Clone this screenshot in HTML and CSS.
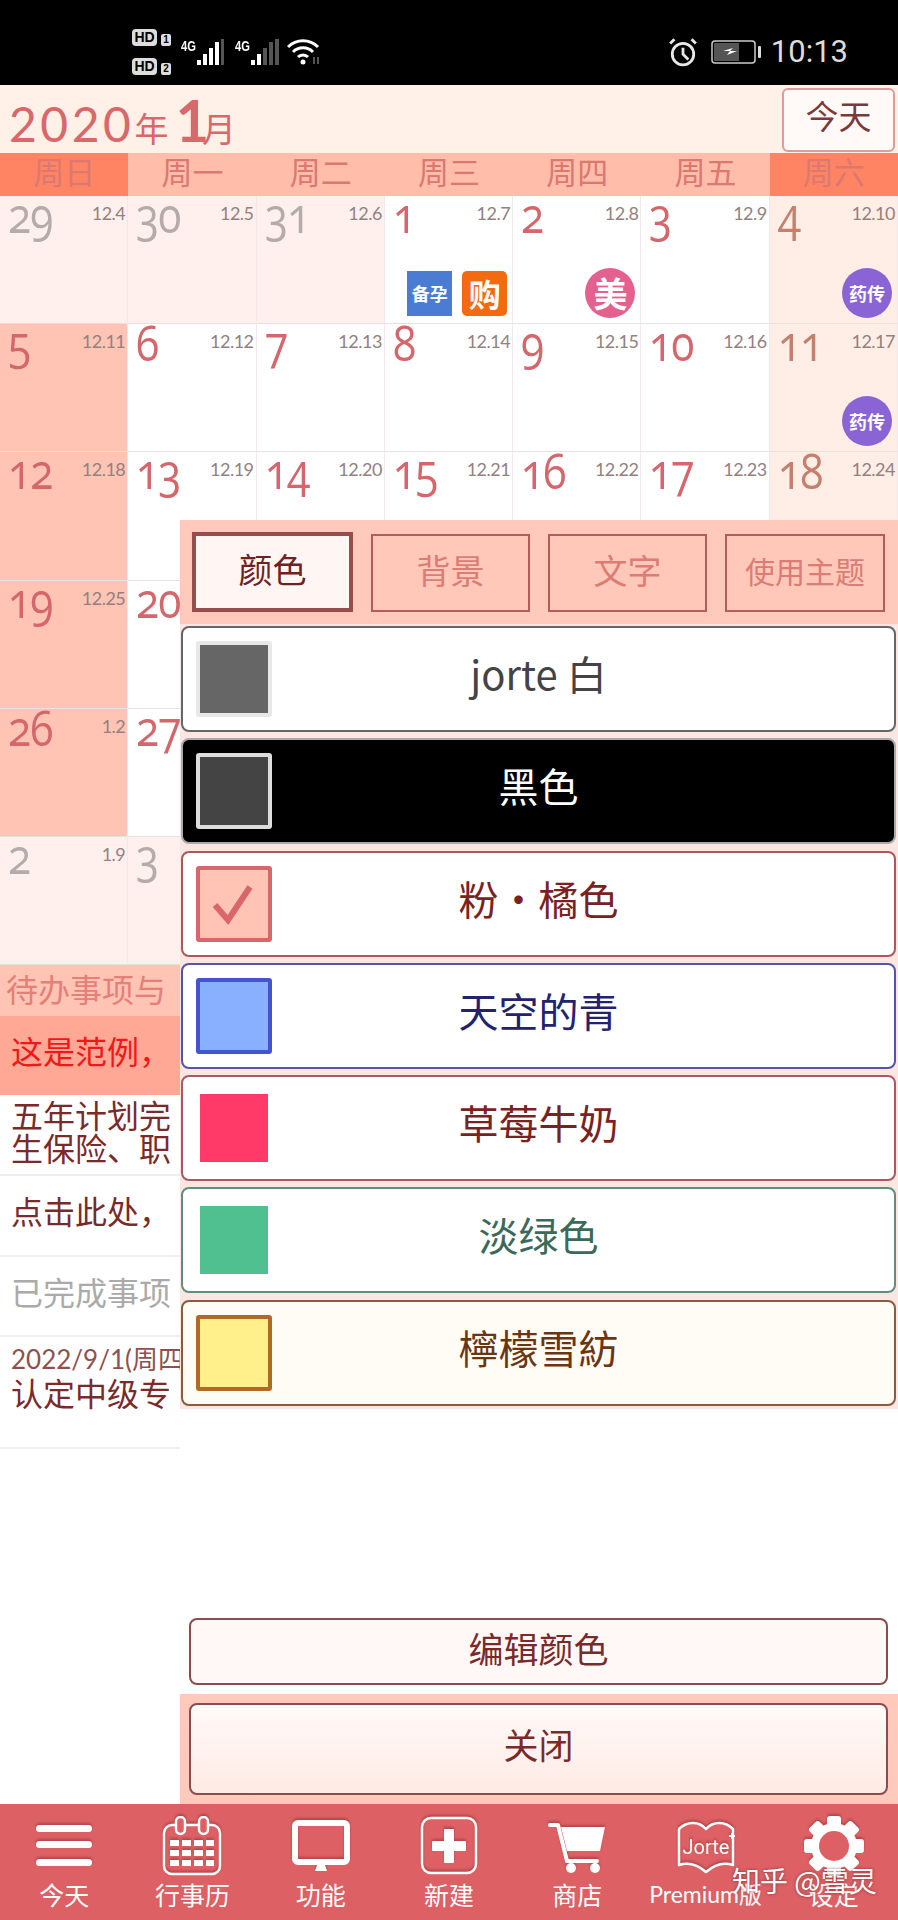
FILE: index.html
```html
<!DOCTYPE html>
<html lang="zh-CN">
  <head>
    <meta charset="UTF-8" />
    <meta name="viewport" content="width=device-width, initial-scale=1.0" />
    <title>jorte</title>
    <link rel="stylesheet" href="styles.css">
  </head>
  <body>
    <div id="app">
      <!-- status bar -->
      <div class="status">
        <div class="hd-col">
          <div class="hd"><span class="hd-box">HD</span><span class="hd-num">1</span></div>
          <div class="hd"><span class="hd-box">HD</span><span class="hd-num">2</span></div>
        </div>
        <div class="sim"><span class="sim-label">4G</span>
          <svg width="28" height="26" viewBox="0 0 28 26"><g fill="#fff"><rect x="0" y="21" width="4" height="5"/><rect x="6" y="15" width="4" height="11"/><rect x="12" y="9" width="4" height="17"/><rect x="18" y="3" width="4" height="23"/></g><rect x="24" y="0" width="3" height="26" fill="#555"/></svg>
        </div>
        <div class="sim"><span class="sim-label">4G</span>
          <svg width="29" height="26" viewBox="0 0 29 26"><rect x="0" y="21" width="4" height="5" fill="#fff"/><rect x="6" y="15" width="4" height="11" fill="#fff"/><g fill="#555"><rect x="12" y="9" width="4" height="17"/><rect x="18" y="3" width="4" height="23"/><rect x="24" y="0" width="4" height="26"/></g></svg>
        </div>
        <svg class="wifi" width="34" height="28" viewBox="0 0 34 28" fill="none" stroke="#fff" stroke-width="3"><path d="M1 9a21 21 0 0 1 30 0"/><path d="M6 14a14 14 0 0 1 20 0"/><path d="M11 19a7 7 0 0 1 10 0"/><circle cx="16" cy="24" r="2.5" fill="#fff" stroke="none"/><path d="M27 19v7M31 19v7" stroke="#555" stroke-width="2"/></svg>
        <div class="status-right">
          <svg width="30" height="30" viewBox="0 0 28 28" fill="none" stroke="#e8e8e8" stroke-width="2.6"><circle cx="14" cy="16" r="10"/><path d="M14 10v6l5 5M2 6l4-4M26 6l-4-4"/></svg>
          <svg width="50" height="24" viewBox="0 0 50 24"><rect x="1" y="1" width="43" height="22" rx="3" fill="none" stroke="#ccc" stroke-width="1.5"/><rect x="3" y="3" width="25" height="18" fill="#555"/><path d="M12 11l10-3-3 3h7l-10 4 3-4z" fill="#fff"/><rect x="47" y="6" width="3" height="12" rx="1" fill="#ddd"/></svg>
          <span class="clock">10:13</span>
        </div>
      </div>

      <div class="head">
        <div class="title"><span class="year">2020</span><span class="unit">年</span><span class="month">1</span><span class="unit">月</span></div>
        <div class="today-btn">今天</div>
      </div>

      <div class="week">
        <div class="wd wd-end">周日</div>
        <div class="wd">周一</div>
        <div class="wd">周二</div>
        <div class="wd">周三</div>
        <div class="wd">周四</div>
        <div class="wd">周五</div>
        <div class="wd wd-end">周六</div>
      </div>

      <div class="cal">
        <div class="c out"><div class="top"><span class="n">29</span><span class="lu">12.4</span></div></div>
        <div class="c out"><div class="top"><span class="n">30</span><span class="lu">12.5</span></div></div>
        <div class="c out"><div class="top"><span class="n">31</span><span class="lu">12.6</span></div></div>
        <div class="c"><div class="top"><span class="n">1</span><span class="lu">12.7</span></div>
          <div class="events"><span class="ev ev-blue">备孕</span><span class="ev ev-orange">购</span></div></div>
        <div class="c"><div class="top"><span class="n">2</span><span class="lu">12.8</span></div>
          <div class="events"><span class="ev ev-round ev-pink">美</span></div></div>
        <div class="c"><div class="top"><span class="n">3</span><span class="lu">12.9</span></div></div>
        <div class="c sat"><div class="top"><span class="n">4</span><span class="lu">12.10</span></div>
          <div class="events"><span class="ev ev-round ev-purple">药传</span></div></div>

        <div class="c sun"><div class="top"><span class="n">5</span><span class="lu">12.11</span></div></div>
        <div class="c"><div class="top"><span class="n">6</span><span class="lu">12.12</span></div></div>
        <div class="c"><div class="top"><span class="n">7</span><span class="lu">12.13</span></div></div>
        <div class="c"><div class="top"><span class="n">8</span><span class="lu">12.14</span></div></div>
        <div class="c"><div class="top"><span class="n">9</span><span class="lu">12.15</span></div></div>
        <div class="c"><div class="top"><span class="n">10</span><span class="lu">12.16</span></div></div>
        <div class="c sat"><div class="top"><span class="n">11</span><span class="lu">12.17</span></div>
          <div class="events"><span class="ev ev-round ev-purple">药传</span></div></div>

        <div class="c sun"><div class="top"><span class="n">12</span><span class="lu">12.18</span></div></div>
        <div class="c"><div class="top"><span class="n">13</span><span class="lu">12.19</span></div></div>
        <div class="c"><div class="top"><span class="n">14</span><span class="lu">12.20</span></div></div>
        <div class="c"><div class="top"><span class="n">15</span><span class="lu">12.21</span></div></div>
        <div class="c"><div class="top"><span class="n">16</span><span class="lu">12.22</span></div></div>
        <div class="c"><div class="top"><span class="n">17</span><span class="lu">12.23</span></div></div>
        <div class="c sat"><div class="top"><span class="n">18</span><span class="lu">12.24</span></div></div>

        <div class="c sun"><div class="top"><span class="n">19</span><span class="lu">12.25</span></div></div>
        <div class="c"><div class="top"><span class="n">20</span></div></div>
        <div class="c"></div><div class="c"></div><div class="c"></div><div class="c"></div><div class="c sat"></div>

        <div class="c sun"><div class="top"><span class="n">26</span><span class="lu">1.2</span></div></div>
        <div class="c"><div class="top"><span class="n">27</span></div></div>
        <div class="c"></div><div class="c"></div><div class="c"></div><div class="c"></div><div class="c sat"></div>

        <div class="c out"><div class="top"><span class="n">2</span><span class="lu">1.9</span></div></div>
        <div class="c out"><div class="top"><span class="n">3</span></div></div>
        <div class="c out"></div><div class="c out"></div><div class="c out"></div><div class="c out"></div><div class="c out"></div>
      </div>

      <div class="todo">
        <div class="todo-head">待办事项与</div>
        <div class="todo-row todo-red">这是范例，</div>
        <div class="todo-row todo-two">五年计划完<br />生保险、职</div>
        <div class="todo-row">点击此处，</div>
        <div class="todo-row todo-done">已完成事项</div>
        <div class="todo-row todo-dated"><span class="todo-date">2022/9/1(周四</span>认定中级专</div>
      </div>

      <div class="bottom">
        <div class="tb">
          <svg class="tb-icon" width="60" height="60" viewBox="0 0 60 60" fill="#fff"><rect x="2" y="9" width="56" height="7" rx="3.5"/><rect x="2" y="25" width="56" height="7" rx="3.5"/><rect x="2" y="43" width="56" height="7" rx="3.5"/></svg>
          <span>今天</span>
        </div>
        <div class="tb">
          <svg class="tb-icon" width="60" height="60" viewBox="0 0 60 60"><rect x="2" y="9" width="56" height="49" rx="8" fill="none" stroke="#fff" stroke-width="2.5"/><g fill="#dc6064" stroke="#fff" stroke-width="2.5"><rect x="14" y="1" width="9" height="17" rx="4.5"/><rect x="37" y="1" width="9" height="17" rx="4.5"/></g><g fill="#fff"><rect x="8" y="24" width="9" height="6"/><rect x="20" y="24" width="9" height="6"/><rect x="32" y="24" width="9" height="6"/><rect x="44" y="24" width="8" height="6"/><rect x="8" y="34" width="9" height="6"/><rect x="20" y="34" width="9" height="6"/><rect x="32" y="34" width="9" height="6"/><rect x="44" y="34" width="8" height="6"/><rect x="8" y="44" width="9" height="6"/><rect x="20" y="44" width="9" height="6"/><rect x="32" y="44" width="9" height="6"/><rect x="44" y="44" width="8" height="6"/></g></svg>
          <span>行事历</span>
        </div>
        <div class="tb">
          <svg class="tb-icon" width="60" height="60" viewBox="0 0 60 60"><rect x="4" y="7" width="52" height="39" rx="3" fill="none" stroke="#fff" stroke-width="6"/><path d="M26 49h8l2 6H24z" fill="#fff"/></svg>
          <span>功能</span>
        </div>
        <div class="tb">
          <svg class="tb-icon" width="60" height="60" viewBox="0 0 60 60"><rect x="3" y="2" width="54" height="55" rx="9" fill="none" stroke="#fff" stroke-width="2.5"/><path d="M26 14h8v12h12v8H34v12h-8V34H14v-8h12z" fill="#fff" stroke="#fff" stroke-linejoin="round" stroke-width="2"/></svg>
          <span>新建</span>
        </div>
        <div class="tb">
          <svg class="tb-icon" width="60" height="60" viewBox="0 0 60 60"><path d="M3 9h8l9 36h30" fill="none" stroke="#fff" stroke-width="4" stroke-linecap="round" stroke-linejoin="round"/><path d="M14 11h44l-5 24H20z" fill="#fff"/><circle cx="24" cy="52" r="5" fill="#fff"/><circle cx="48" cy="52" r="5" fill="#fff"/></svg>
          <span>商店</span>
        </div>
        <div class="tb">
          <svg class="tb-icon" width="60" height="60" viewBox="0 0 60 60"><path d="M3 13c8-8 20-8 27 0 7-8 19-8 27 0v36c-9-3-18-1-27 7-9-8-18-10-27-7z" fill="none" stroke="#fff" stroke-width="2.5" stroke-linejoin="round"/><path d="M56 17v6M53 20h6" stroke="#fff" stroke-width="2"/><text x="30" y="38" text-anchor="middle" class="book-text">Jorte</text></svg>
          <span class="tb-nowrap">Premium版</span>
        </div>
        <div class="tb">
          <svg class="tb-icon" width="60" height="60" viewBox="0 0 60 60"><g fill="#fff"><rect x="23" y="0" width="14" height="60" rx="3"/><rect x="23" y="0" width="14" height="60" rx="3" transform="rotate(45 30 30)"/><rect x="23" y="0" width="14" height="60" rx="3" transform="rotate(90 30 30)"/><rect x="23" y="0" width="14" height="60" rx="3" transform="rotate(135 30 30)"/></g><circle cx="30" cy="30" r="19" fill="#dc6064" stroke="#fff" stroke-width="8"/></svg>
          <span>设定</span>
        </div>
      </div>

      <!-- theme panel, lies over the calendar -->
      <div class="panel">
        <div class="tabs">
          <div class="tab tab-on">颜色</div>
          <div class="tab">背景</div>
          <div class="tab">文字</div>
          <div class="tab tab-small">使用主题</div>
        </div>
        <div class="colors">
          <div class="color c-white"><span class="sw"></span><span class="color-name">jorte 白</span></div>
          <div class="color c-black"><span class="sw"></span><span class="color-name">黑色</span></div>
          <div class="color c-pink"><span class="sw">
            <svg width="50" height="50" viewBox="0 0 50 50" fill="none" stroke="#d8666a" stroke-width="6"><path d="M6 26l13 15L41 8"/></svg>
          </span><span class="color-name">粉・橘色</span></div>
          <div class="color c-sky"><span class="sw"></span><span class="color-name">天空的青</span></div>
          <div class="color c-berry"><span class="sw"></span><span class="color-name">草莓牛奶</span></div>
          <div class="color c-green"><span class="sw"></span><span class="color-name">淡绿色</span></div>
          <div class="color c-lemon"><span class="sw"></span><span class="color-name">檸檬雪紡</span></div>
        </div>
        <div class="panel-space"></div>
        <div class="edit-wrap"><div class="edit-btn">编辑颜色</div></div>
        <div class="close-wrap"><div class="close-btn">关闭</div></div>
      </div>

      <div class="watermark">知乎 @雪灵</div>
    </div>
  </body>
</html>
```
FILE: styles.css
```css
body {
  margin: 0;
  font-family: "Noto Sans CJK SC", "Noto Sans", sans-serif;
}
#app {
  position: relative;
  width: 898px;
  height: 1920px;
  display: flex;
  flex-direction: column;
  overflow: hidden;
  background: #fff;
}

/* status bar */
.status {
  height: 85px;
  background: #000;
  display: flex;
  align-items: center;
  padding: 18px 0 0 132px;
  box-sizing: border-box;
  color: #fff;
}
.hd-col {
  display: flex;
  flex-direction: column;
  gap: 12px;
  margin-right: 10px;
}
.hd {
  display: flex;
  align-items: flex-end;
  gap: 4px;
}
.hd-box {
  width: 25px;
  height: 17px;
  background: #ddd;
  color: #000;
  border-radius: 4px;
  font: bold 14px/17px "Liberation Sans", sans-serif;
  text-align: center;
}
.hd-num {
  width: 10px;
  height: 12px;
  background: #ddd;
  color: #000;
  border-radius: 2px;
  font: bold 10px/12px "Liberation Sans", sans-serif;
  text-align: center;
}
.sim {
  display: flex;
  align-items: flex-end;
  margin-right: 10px;
}
.sim-label {
  width: 16px;
  font: bold 14px/14px "Liberation Sans", sans-serif;
  transform: scaleX(0.8);
  transform-origin: left;
  align-self: flex-start;
}
.wifi {
  margin-left: -3px;
}
.status-right {
  margin-left: auto;
  display: flex;
  align-items: center;
  gap: 13px;
  padding-right: 50px;
}
.clock {
  font: 400 31px/1 Roboto, sans-serif;
  color: #ddd;
  margin-left: -3px;
}

/* month header */
.head {
  height: 68px;
  background: #fff0e8;
  display: flex;
  justify-content: space-between;
  align-items: flex-end;
  box-sizing: border-box;
  padding: 0 3px 1px 9px;
  color: #d8686a;
}
.title {
  display: flex;
  align-items: baseline;
  margin-bottom: -4px;
  line-height: 56px;
}
.year {
  font: 400 48px/56px Lato, sans-serif;
  letter-spacing: 3.5px;
}
.unit {
  font-size: 34px;
}
.month {
  font: 700 58px/56px Lato, sans-serif;
  margin: 0 -7px 0 7px;
}
.today-btn {
  width: 113px;
  height: 64px;
  box-sizing: border-box;
  background: #fffaf8;
  border: 2px solid #e09a9a;
  border-radius: 6px;
  color: #7a3a3a;
  font-size: 33px;
  line-height: 50px;
  text-align: center;
}

/* week row */
.week {
  display: grid;
  grid-template-columns: repeat(7, 1fr);
  height: 43px;
  background: #ffbdaa;
}
.wd {
  text-align: center;
  color: #dc7870;
  font-size: 31px;
  line-height: 35px;
}
.wd-end {
  background: #ff8464;
}

/* calendar */
.cal {
  display: grid;
  grid-template-columns: repeat(7, 1fr);
  grid-template-rows: repeat(6, 1fr);
  height: 769px;
}
.c {
  display: flex;
  flex-direction: column;
  border-right: 1px solid #f1e9e9;
  border-bottom: 1px solid #e8dfdf;
  box-sizing: border-box;
  min-width: 0;
  padding: 0 2px 5px 8px;
}
.out {
  background: #fff0ee;
}
.sun {
  background: #ffc4b4;
}
.sat {
  background: #ffeee6;
}
.top {
  display: flex;
  justify-content: space-between;
  align-items: flex-start;
}
.n {
  font: 400 50px/36px "Open Sans", sans-serif;
  font-feature-settings: "onum";
  color: #d4666c;
  letter-spacing: -1px;
  transform: scaleX(0.85);
  transform-origin: left;
}
.lu {
  font: 400 18px/20px Lato, sans-serif;
  color: #94807f;
  margin-top: 7px;
  letter-spacing: -0.5px;
}
.out .n {
  color: #b5abab;
}
.sat .n {
  color: #c4806c;
}
.events {
  margin-top: auto;
  height: 50px;
  display: flex;
  justify-content: flex-end;
  align-items: center;
  gap: 10px;
  padding-right: 3px;
}
.ev {
  width: 45px;
  height: 45px;
  color: #fff;
  font-size: 18px;
  font-weight: bold;
  line-height: 45px;
  text-align: center;
  border-radius: 3px;
}
.ev-blue {
  background: #4a7cd4;
  border-radius: 0;
}
.ev-orange {
  background: #f46a10;
  font-size: 32px;
  border-radius: 5px;
}
.ev-round {
  width: 50px;
  height: 50px;
  line-height: 50px;
  border-radius: 50%;
}
.ev-pink {
  background: #e4608e;
  font-size: 34px;
}
.ev-purple {
  background: #8a64d4;
}

/* to do list */
.todo {
  flex: 1;
  color: #7a2a2a;
  font-size: 32px;
  white-space: nowrap;
  overflow: hidden;
  line-height: 33px;
}
.todo-head {
  height: 51px;
  box-sizing: border-box;
  background: #ffc4b4;
  color: #e48078;
  padding-left: 6px;
  line-height: 46px;
}
.todo-row {
  height: 81px;
  box-sizing: border-box;
  border-bottom: 2px solid #eee;
  padding: 18px 0 0 11px;
}
.todo-red {
  height: 79px;
  background: #ffa896;
  color: #f01818;
  border-bottom: 0;
}
.todo-two {
  padding-top: 3px;
}
.todo-done {
  color: #aaa;
  height: 80px;
}
.todo-dated {
  height: 112px;
  padding-top: 6px;
}
.todo-date {
  display: block;
  height: 33px;
  font-family: Lato, "Noto Sans CJK SC", sans-serif;
  font-size: 26px;
  color: #8f5050;
}

/* bottom bar */
.bottom {
  height: 116px;
  background: #dc6064;
  display: grid;
  grid-template-columns: repeat(7, 1fr);
  color: #fff;
  font-size: 25px;
}
.tb {
  display: flex;
  flex-direction: column;
  align-items: center;
  padding-top: 12px;
  min-width: 0;
}
.tb span {
  line-height: 26px;
  margin-top: 5px;
}
.tb span.tb-nowrap {
  white-space: nowrap;
  font-family: Lato, "Noto Sans CJK SC", sans-serif;
  font-size: 23px;
}
.tb-icon {
  display: block;
  filter: drop-shadow(0 -2px 1px rgba(130, 40, 40, 0.45));
}
.book-text {
  font: 400 20px Roboto, sans-serif;
  fill: #fff;
}

/* theme panel */
.panel {
  position: absolute;
  left: 180px;
  right: 0;
  top: 520px;
  bottom: 116px;
  display: flex;
  flex-direction: column;
  background: #fff;
}
.tabs {
  height: 104px;
  box-sizing: border-box;
  background: #ffcabc;
  display: grid;
  grid-template-columns: 161px 159px 159px 160px;
  column-gap: 18px;
  padding: 12px 0 12px 12px;
}
.tab {
  border: 2px solid #b45c5c;
  background: #ffc8b8;
  color: #dc7c74;
  font-size: 34px;
  line-height: 68px;
  text-align: center;
  margin-top: 2px;
}
.tab-on {
  border: 4px solid #984c4c;
  background: #fff5f2;
  color: #6e2222;
  margin-top: 0;
  line-height: 66px;
}
.tab-small {
  font-size: 30px;
}
.colors {
  display: flex;
  flex-direction: column;
  gap: 6.3px;
  background: #fbe6e1;
  padding: 2px 2px 3px 1px;
}
.color {
  height: 106px;
  box-sizing: border-box;
  border: 2px solid #888;
  border-radius: 8px;
  background: #fff;
  display: grid;
  grid-template-columns: 93px 1fr 93px;
  align-items: center;
}
.sw {
  width: 76px;
  height: 76px;
  box-sizing: border-box;
  margin-left: 13px;
  border: 4px solid #888;
  border-radius: 3px;
  display: flex;
  align-items: center;
  justify-content: center;
}
.color-name {
  text-align: center;
  font-size: 40px;
  line-height: 1;
  padding-bottom: 12px;
}
.c-white {
  border-color: #666;
  color: #444;
}
.c-white .sw {
  border: 4px solid #e8e8e8;
  background: #666;
}
.c-black {
  background: #000;
  border-color: #aaa;
  color: #fff;
}
.c-black .sw {
  border-color: #ddd;
  background: #444;
}
.c-pink {
  border-color: #ac5858;
  color: #7a2222;
}
.c-pink .sw {
  border-color: #d8666a;
  background: #ffc4b4;
}
.c-sky {
  border-color: #5454a8;
  color: #22226e;
}
.c-sky .sw {
  border-color: #4454cc;
  background: #88b0ff;
}
.c-berry {
  border-color: #ac5864;
  color: #7a2222;
}
.c-berry .sw {
  border: 4px solid #fff;
  background: #ff3a68;
}
.c-green {
  border-color: #5e8e7c;
  color: #3c6a5a;
}
.c-green .sw {
  border: 4px solid #fff;
  background: #50c090;
}
.c-lemon {
  background: #fffcf5;
  border-color: #8a5c3c;
  color: #6a3612;
}
.c-lemon .sw {
  border-color: #b06a24;
  background: #fff08c;
}
.panel-space {
  flex: 1;
}
.edit-wrap {
  padding: 0 10px 9px 9px;
}
.edit-btn,
.close-btn {
  box-sizing: border-box;
  border: 2px solid #8a4c4c;
  border-radius: 8px;
  color: #7a2a2a;
  font-size: 35px;
  text-align: center;
}
.edit-btn {
  height: 67px;
  line-height: 55px;
  background: #fff8f6;
}
.close-wrap {
  background: #ffcabc;
  padding: 9px 10px 9px 9px;
}
.close-btn {
  height: 92px;
  line-height: 78px;
  background: linear-gradient(#fffaf8, #ffeae4);
}

.watermark {
  position: absolute;
  left: 732px;
  top: 1860px;
  color: #fff;
  font-size: 28px;
  line-height: 40px;
  white-space: nowrap;
  text-shadow: 0 0 3px rgba(90, 30, 30, 0.7);
}
```
